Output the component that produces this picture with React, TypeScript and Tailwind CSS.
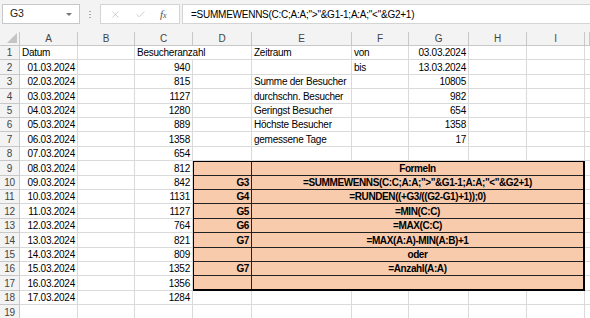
import { Check, X } from "lucide-react";

const colLetters = ["A", "B", "C", "D", "E", "F", "G", "H", "I", ""];

const dates = [
  "01.03.2024", "02.03.2024", "03.03.2024", "04.03.2024", "05.03.2024", "06.03.2024",
  "07.03.2024", "08.03.2024", "09.03.2024", "10.03.2024", "11.03.2024", "12.03.2024",
  "13.03.2024", "14.03.2024", "15.03.2024", "16.03.2024", "17.03.2024",
];
const visitors = [940, 815, 1127, 1280, 889, 1358, 654, 812, 842, 1131, 1127, 764, 821, 809, 1352, 1356, 1284];

// E, F, G for rows 1..7
const summary: Record<number, [string, string, string]> = {
  1: ["Zeitraum", "von", "03.03.2024"],
  2: ["", "bis", "13.03.2024"],
  3: ["Summe der Besucher", "", "10805"],
  4: ["durchschn. Besucher", "", "982"],
  5: ["Geringst Besucher", "", "654"],
  6: ["Höchste Besucher", "", "1358"],
  7: ["gemessene Tage", "", "17"],
};

const formulas: [string, string][] = [
  ["", "Formeln"],
  ["G3", '=SUMMEWENNS(C:C;A:A;">"&G1-1;A:A;"<"&G2+1)'],
  ["G4", "=RUNDEN((+G3/((G2-G1)+1));0)"],
  ["G5", "=MIN(C:C)"],
  ["G6", "=MAX(C:C)"],
  ["G7", "=MAX(A:A)-MIN(A:B)+1"],
  ["", "oder"],
  ["G7", "=Anzahl(A:A)"],
  ["", ""],
];

const Cell = ({
  children,
  right = false,
  className = "",
}: {
  children?: React.ReactNode;
  right?: boolean;
  className?: string;
}) => (
  <div
    className={`flex items-center overflow-hidden whitespace-nowrap border-r border-b border-[#dadada] px-[2px] ${
      right ? "justify-end" : ""
    } ${className}`}
  >
    {children}
  </div>
);

const App = () => {
  const rows = Array.from({ length: 19 }, (_, i) => i + 1);

  return (
    <div
      className="w-[590px] h-[318px] overflow-hidden bg-white text-[10px] tracking-[-0.25px] text-black"
      style={{ fontFamily: '"Liberation Sans", Arial, sans-serif' }}
    >
      {/* formula bar */}
      <div className="h-[32px] bg-[#f3f3f3] flex items-start pt-[4px] pl-[2px]">
        <div className="w-[78px] h-[20px] bg-white border border-[#c8c8c8] flex items-center justify-between px-[7px]">
          <span className="text-[10.5px] text-[#222]">G3</span>
          <span className="w-0 h-0 border-l-[3px] border-r-[3px] border-t-[3px] border-l-transparent border-r-transparent border-t-[#777]" />
        </div>
        <div className="w-[20px] h-[20px] flex flex-col items-center justify-center gap-[2px]">
          <span className="w-[2px] h-[1px] bg-[#aaa]" />
          <span className="w-[2px] h-[1px] bg-[#aaa]" />
          <span className="w-[2px] h-[1px] bg-[#aaa]" />
        </div>
        <div className="w-[80px] h-[20px] bg-white border border-[#d4d4d4] flex items-center gap-[14px] pl-[9px]">
          <X size={11} strokeWidth={1.2} className="text-[#a8a8a8]" />
          <Check size={11} strokeWidth={1.2} className="text-[#a8a8a8]" />
          <span
            className="italic text-[11px] text-[#555] tracking-normal"
            style={{ fontFamily: '"Liberation Serif", serif' }}
          >
            f<span className="text-[8px]">x</span>
          </span>
        </div>
        <div className="flex-1 h-[20px] ml-[2px] bg-white border border-[#d4d4d4] border-r-0 flex items-center pl-[8px] text-[10px]">
          =SUMMEWENNS(C:C;A:A;"&gt;"&amp;G1-1;A:A;"&lt;"&amp;G2+1)
        </div>
      </div>

      {/* sheet */}
      <div className="grid grid-cols-[20px_58px_57px_58px_59px_100px_57px_60px_58px_58px_1fr] grid-rows-[14px_14px_15px_14px_15px_14px_14px_15px_14px_15px_14px_14px_15px_14px_15px_14px_14px_15px_14px_15px]">
        {/* header row */}
        <div className="relative bg-[#f3f3f3] border-r border-b border-[#c8c8c8]">
          <svg className="absolute right-[2px] bottom-[2px]" width="10" height="10" viewBox="0 0 10 10">
            <path d="M10 0 L10 10 L0 10 Z" fill="#c4c4c4" />
          </svg>
        </div>
        {colLetters.map((c, i) => (
          <div
            key={i}
            className="bg-[#f3f3f3] border-r border-b border-[#c8c8c8] flex items-center justify-center text-[10px] text-[#444]"
          >
            {c}
          </div>
        ))}

        {/* Formeln block D9:I17 */}
        <div className="col-start-5 col-span-6 row-start-10 row-span-9 -mt-px -ml-px bg-[#f8cbad] border-2 border-black grid grid-cols-[58px_1fr] grid-rows-[14px_14px_14px_15px_14px_15px_14px_14px_13px] font-bold tracking-[-0.4px]">
          {formulas.map(([ref, f], i) => (
            <div key={i} className="contents">
              <div
                className={`flex items-center justify-end pr-[2px] border-r border-[#222] ${
                  i < formulas.length - 1 ? "border-b" : ""
                }`}
              >
                {ref}
              </div>
              <div
                className={`flex items-center justify-center whitespace-nowrap border-[#222] ${
                  i < formulas.length - 1 ? "border-b" : ""
                }`}
              >
                {f}
              </div>
            </div>
          ))}
        </div>

        {rows.map((r) => {
          const inBlock = r >= 9 && r <= 17;
          const s = summary[r];
          return (
            <div key={r} className="contents">
              <div className="bg-[#f3f3f3] border-r border-b border-[#c8c8c8] flex items-center justify-center text-[10px] text-[#444]">
                {r}
              </div>
              {r === 1 ? (
                <Cell>Datum</Cell>
              ) : (
                <Cell right>{r <= 18 ? dates[r - 2] : ""}</Cell>
              )}
              <Cell />
              {r === 1 ? (
                <Cell className="col-span-2 overflow-visible">Besucheranzahl</Cell>
              ) : (
                <>
                  <Cell right>{r <= 18 ? visitors[r - 2] : ""}</Cell>
                  {!inBlock && <Cell />}
                </>
              )}
              {!inBlock && (
                <>
                  <Cell>{s ? s[0] : ""}</Cell>
                  <Cell>{s ? s[1] : ""}</Cell>
                  <Cell right>{s ? s[2] : ""}</Cell>
                  <Cell />
                  <Cell />
                </>
              )}
              <Cell className="border-r-0" />
            </div>
          );
        })}
      </div>
    </div>
  );
};

export default App;
